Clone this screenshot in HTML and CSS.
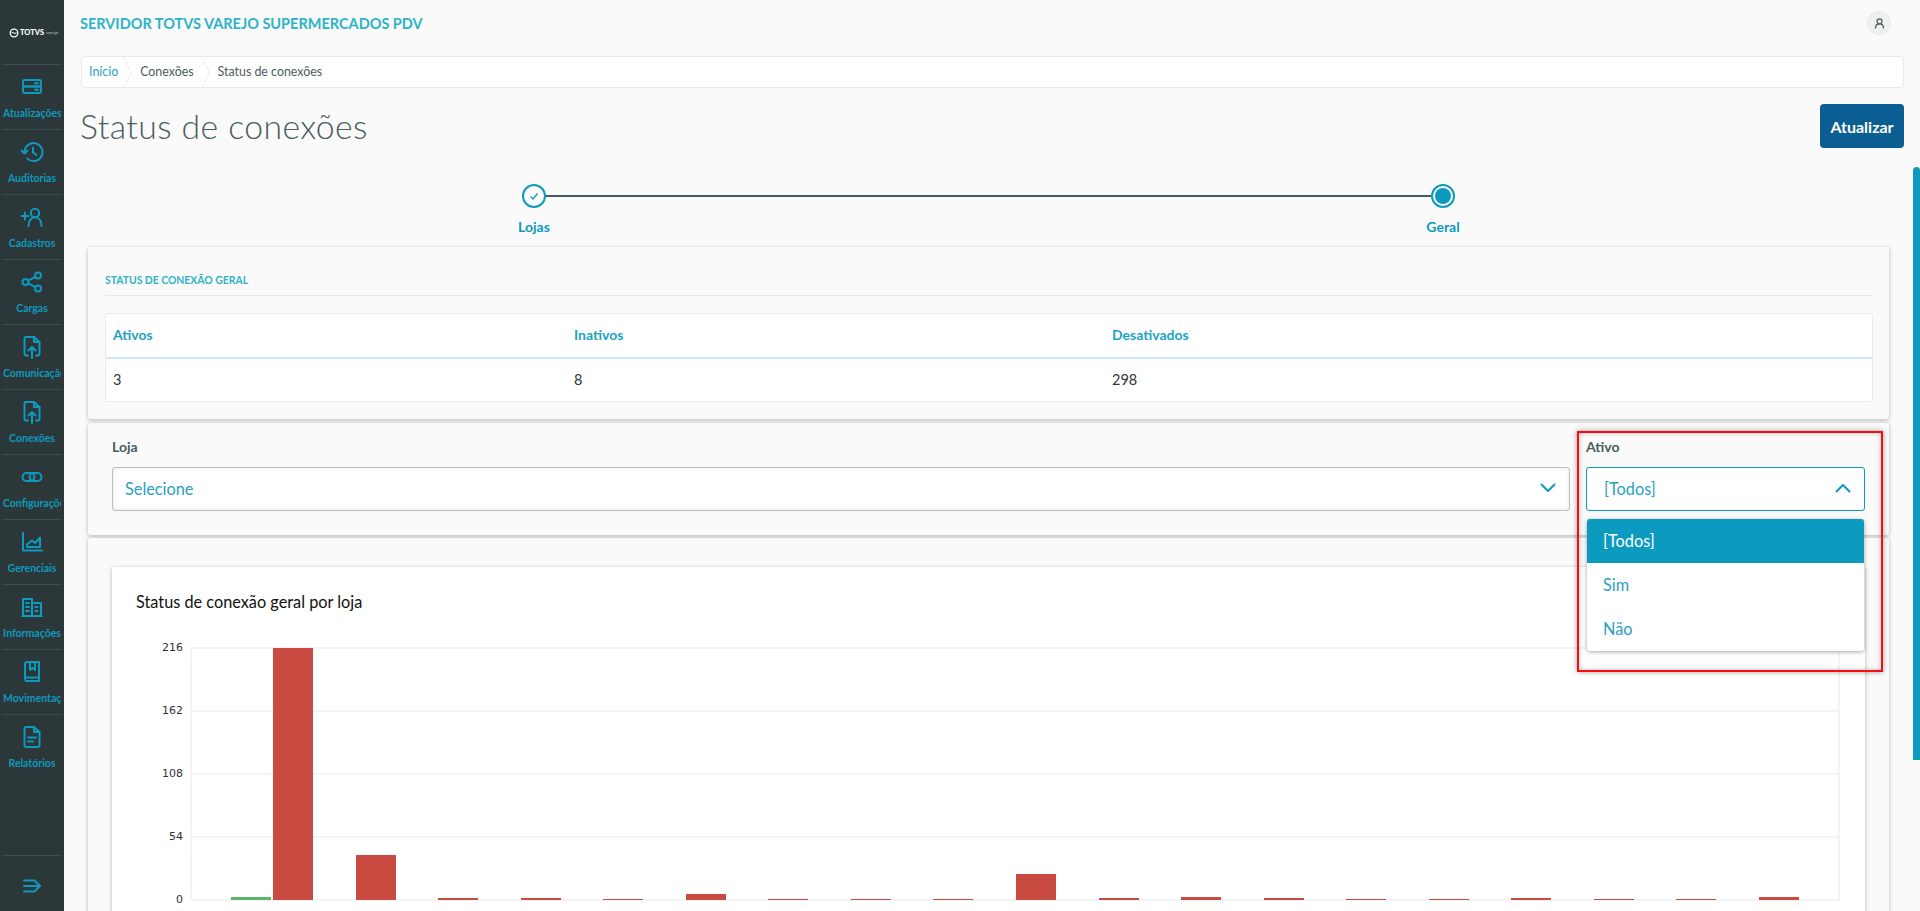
FILE: index.html
```html
<!DOCTYPE html>
<html lang="pt-BR">
<head>
<meta charset="utf-8">
<title>Status de conexões</title>
<link rel="stylesheet" href="styles.css">
</head>
<body>
<aside class="sidebar">
  <div class="logo">
    <svg class="logo-mark" viewBox="0 0 10 10"><circle cx="5" cy="5" r="3.8" fill="none" stroke="#fff" stroke-width="1.3"/><path d="M2.5 4.2 L6 5.4 L7.5 4.8" fill="none" stroke="#fff" stroke-width="1"/></svg>
    <span class="logo-name">TOTVS</span><span class="logo-sub">varejo</span>
  </div>
  <nav class="nav">
    <a class="nav-item"><svg class="nav-icon" viewBox="0 0 24 24"><rect x="3" y="5" width="18" height="6.5" rx="1.4"/><rect x="3" y="11.5" width="18" height="6.5" rx="1.4"/><path d="M15 8.2h3M15 14.8h3"/></svg><span class="nav-label">Atualizações</span></a>
    <a class="nav-item"><svg class="nav-icon" viewBox="0 0 24 24"><path d="M4.5 12a9 9 0 1 1 2.8 6.6"/><path d="M1.5 10.5 4.5 13.5 7.5 10.5"/><path d="M13 7.5V12.5L16.5 15"/></svg><span class="nav-label">Auditorias</span></a>
    <a class="nav-item"><svg class="nav-icon" viewBox="0 0 24 24"><circle cx="15" cy="8" r="4.2"/><path d="M8.5 21c0-5 2.5-8.8 6.500-8.800s6.500 3.800 6.500 8.800"/><path d="M1.500 11h7M5 7.500v7"/></svg><span class="nav-label">Cadastros</span></a>
    <a class="nav-item"><svg class="nav-icon" viewBox="0 0 24 24"><circle cx="18" cy="5.500" r="3"/><circle cx="18" cy="18.500" r="3"/><circle cx="5.500" cy="12" r="3"/><path d="M8.200 10.600 15.300 6.900M8.200 13.400 15.300 17.100"/></svg><span class="nav-label">Cargas</span></a>
    <a class="nav-item"><svg class="nav-icon" viewBox="0 0 24 24"><path d="M8 20.500H6.500A2 2 0 0 1 4.500 18.500V3.500A1.500 1.500 0 0 1 6 2H14L19.500 7V18.500A2 2 0 0 1 17.500 20.500H16"/><path d="M14 2V7H19.500"/><path d="M12 23V12M8.500 15.500 12 12 15.500 15.500"/></svg><span class="nav-label">Comunicação</span></a>
    <a class="nav-item"><svg class="nav-icon" viewBox="0 0 24 24"><path d="M8 20.500H6.500A2 2 0 0 1 4.500 18.500V3.500A1.500 1.500 0 0 1 6 2H14L19.500 7V18.500A2 2 0 0 1 17.500 20.500H16"/><path d="M14 2V7H19.500"/><path d="M12 23V12M8.500 15.500 12 12 15.500 15.500"/></svg><span class="nav-label">Conexões</span></a>
    <a class="nav-item"><svg class="nav-icon" viewBox="0 0 24 24"><rect x="2.500" y="8" width="12" height="8" rx="4"/><rect x="9.500" y="8" width="12" height="8" rx="4"/></svg><span class="nav-label">Configurações</span></a>
    <a class="nav-item"><svg class="nav-icon" viewBox="0 0 24 24"><path d="M3 3V20.500H22"/><path d="M7 17 7 14.500 12 10.500 15 13 20 7.500V17Z"/></svg><span class="nav-label">Gerenciais</span></a>
    <a class="nav-item"><svg class="nav-icon" viewBox="0 0 24 24"><path d="M3 21V4H12V21M12 8H21V21M2 21H22"/><path d="M6 8h3M6 12h3M6 16h3M15.500 12h2M15.500 16h2"/></svg><span class="nav-label">Informações</span></a>
    <a class="nav-item"><svg class="nav-icon" viewBox="0 0 24 24"><path d="M5 18V4A2 2 0 0 1 7 2H19V21H7A2 2 0 0 1 5 19V17.500H19"/><path d="M10 2V10L12.500 8 15 10V2"/></svg><span class="nav-label">Movimentações</span></a>
    <a class="nav-item"><svg class="nav-icon" viewBox="0 0 24 24"><path d="M6 2H14L19.500 7V20A2 2 0 0 1 17.500 22H6.500A2 2 0 0 1 4.500 20V3.500A1.500 1.500 0 0 1 6 2Z"/><path d="M14 2V7H19.500M8 12.500H16M8 16.500H13"/></svg><span class="nav-label">Relatórios</span></a>
  </nav>
  <div class="collapse">
    <svg class="collapse-icon" viewBox="0 0 18 16"><path d="M1 2.500H11.500M1 8H16.500M1 13.500H11.500M12.500 3.500 17 8 12.500 12.500"/></svg>
  </div>
</aside>

<div class="main">
  <div class="content">
    <header class="topbar">
      <span class="app-title">SERVIDOR TOTVS VAREJO SUPERMERCADOS PDV</span>
      <span class="avatar"><svg viewBox="0 0 24 24"><circle cx="12" cy="8.500" r="4"/><path d="M5.500 20c0-5 2.500-7.500 6.500-7.500s6.500 2.500 6.500 7.500"/></svg></span>
    </header>

    <nav class="crumbs">
      <a class="crumb crumb-link">Início</a>
      <span class="crumb">Conexões</span>
      <span class="crumb crumb-last">Status de conexões</span>
    </nav>

    <div class="title-row">
      <h1 class="page-title">Status de conexões</h1>
      <button class="primary-btn">Atualizar</button>
    </div>

    <div class="stepper">
      <div class="step">
        <span class="step-dot"><svg viewBox="0 0 12 12"><path d="M2.500 6.500 5 9 9.500 3.500"/></svg></span>
        <span class="step-label">Lojas</span>
      </div>
      <div class="step-line"></div>
      <div class="step">
        <span class="step-dot"><span class="step-fill"></span></span>
        <span class="step-label">Geral</span>
      </div>
    </div>

    <section class="panel panel-summary">
      <h2 class="panel-heading">STATUS DE CONEXÃO GERAL</h2>
      <div class="summary-table">
        <div class="cell head">Ativos</div>
        <div class="cell head">Inativos</div>
        <div class="cell head">Desativados</div>
        <div class="cell">3</div>
        <div class="cell">8</div>
        <div class="cell">298</div>
      </div>
    </section>

    <section class="panel panel-filters">
      <div class="field field-grow">
        <label class="field-label">Loja</label>
        <div class="select">
          <span>Selecione</span>
          <svg class="chev" viewBox="0 0 16 10"><path d="M1.500 1.500 8 8 14.500 1.500"/></svg>
        </div>
      </div>
      <div class="field field-small">
        <div class="highlight"></div>
        <label class="field-label">Ativo</label>
        <div class="select select-open">
          <span>[Todos]</span>
          <svg class="chev" viewBox="0 0 16 10"><path d="M1.500 8.500 8 2 14.500 8.500"/></svg>
        </div>
        <ul class="menu">
          <li class="menu-item menu-active">[Todos]</li>
          <li class="menu-item">Sim</li>
          <li class="menu-item">Não</li>
        </ul>
      </div>
    </section>

    <section class="panel panel-chart">
      <div class="chart-card">
        <h3 class="chart-title">Status de conexão geral por loja</h3>
        <div class="chart">
          <div class="y-axis">
            <span>216</span><span>162</span><span>108</span><span>54</span><span>0</span>
          </div>
          <div class="plot">
            <div class="slot"><div class="bar bar-green" style="height:3px"></div><div class="bar" style="height:252px"></div></div>
            <div class="slot"><div class="bar" style="height:45px"></div></div>
            <div class="slot"><div class="bar" style="height:2px"></div></div>
            <div class="slot"><div class="bar" style="height:2px"></div></div>
            <div class="slot"><div class="bar" style="height:1px"></div></div>
            <div class="slot"><div class="bar" style="height:6px"></div></div>
            <div class="slot"><div class="bar" style="height:1px"></div></div>
            <div class="slot"><div class="bar" style="height:1px"></div></div>
            <div class="slot"><div class="bar" style="height:1px"></div></div>
            <div class="slot"><div class="bar" style="height:26px"></div></div>
            <div class="slot"><div class="bar" style="height:2px"></div></div>
            <div class="slot"><div class="bar" style="height:3px"></div></div>
            <div class="slot"><div class="bar" style="height:2px"></div></div>
            <div class="slot"><div class="bar" style="height:1px"></div></div>
            <div class="slot"><div class="bar" style="height:1px"></div></div>
            <div class="slot"><div class="bar" style="height:2px"></div></div>
            <div class="slot"><div class="bar" style="height:1px"></div></div>
            <div class="slot"><div class="bar" style="height:1px"></div></div>
            <div class="slot"><div class="bar" style="height:3px"></div></div>
          </div>
        </div>
      </div>
    </section>
  </div>
  <div class="scrolltrack"><div class="scrollthumb"></div></div>
</div>
</body>
</html>
```
FILE: styles.css
```css
* { box-sizing: border-box; }
html, body { margin: 0; height: 911px; overflow: hidden; }
body {
  display: flex;
  background: #fafafa;
  font-family: "Lato", "Open Sans", sans-serif;
  color: #4a5c60;
}

/* sidebar */
.sidebar {
  width: 64px;
  flex: none;
  height: 911px;
  background: #2c3739;
  display: flex;
  flex-direction: column;
}
.logo {
  height: 65px;
  margin: 0 2px;
  padding: 1px 0 0 7px;
  border-bottom: 1px solid #3f4b4d;
  display: flex;
  align-items: center;
  color: #fff;
  white-space: nowrap;
}
.logo-mark { width: 10px; height: 10px; margin-right: 1px; }
.logo-name { font-size: 7.500px; font-weight: 900; line-height: 10px; }
.logo-sub { font-size: 4.500px; margin-left: 2px; color: #c4c9ca; line-height: 10px; }
.nav { flex: 1; display: flex; flex-direction: column; }
.nav-item {
  height: 65px;
  margin: 0 2px;
  padding-top: 10px;
  border-bottom: 1px solid #3f4b4d;
  display: flex;
  flex-direction: column;
  align-items: center;
  overflow: hidden;
}
.nav-item:last-child { border-bottom: none; }
.nav-icon {
  width: 24px;
  height: 24px;
  flex: none;
  fill: none;
  stroke: #0c9abe;
  stroke-width: 2;
  stroke-linecap: round;
  stroke-linejoin: round;
}
.nav-label {
  width: 58px;
  margin-top: 6px;
  overflow: hidden;
  text-align: center;
  white-space: nowrap;
  font-size: 10.500px;
  font-weight: 700;
  line-height: 16px;
  color: #0c9abe;
}
.collapse {
  height: 56px;
  margin: 0 2px;
  padding-top: 4px;
  border-top: 1px solid #3f4b4d;
  display: flex;
  align-items: center;
  justify-content: center;
}
.collapse-icon {
  width: 18px;
  height: 16px;
  fill: none;
  stroke: #0c9abe;
  stroke-width: 2;
  stroke-linecap: round;
  stroke-linejoin: round;
}

/* main column */
.main { flex: 1; min-width: 0; height: 911px; display: flex; overflow: hidden; }
.content { flex: 1; min-width: 0; padding: 0 9px 0 16px; }
.scrolltrack { width: 7px; flex: none; padding-top: 167px; }
.scrollthumb { height: 593px; background: #0c9abe; border-radius: 4px 4px 0 0; }

.topbar {
  height: 56px;
  padding: 0 13px 10px 0;
  display: flex;
  align-items: center;
  justify-content: space-between;
}
.app-title {
  font-size: 14.500px;
  font-weight: 700;
  color: #2db3c6;
}
.avatar {
  width: 24px;
  height: 24px;
  border-radius: 50%;
  background: #f0f0f0;
  border: 1px solid #e8e8e8;
  display: flex;
  align-items: center;
  justify-content: center;
}
.avatar svg {
  width: 15px;
  height: 15px;
  fill: none;
  stroke: #4a5c60;
  stroke-width: 2;
}

/* breadcrumb */
.crumbs {
  height: 32px;
  margin-left: 1px;
  background: #fff;
  border: 1px solid #ebebeb;
  border-radius: 3px;
  display: flex;
  align-items: center;
  font-size: 12.400px;
  overflow: hidden;
}
.crumb {
  position: relative;
  height: 30px;
  line-height: 30px;
  padding: 0 12px;
  white-space: nowrap;
}
.crumb:first-child { padding: 0 10px 0 7px; }
.crumb::after {
  content: "";
  position: absolute;
  right: -7px;
  top: 4px;
  width: 22px;
  height: 22px;
  border-top: 1px solid #e4e4e4;
  border-right: 1px solid #e4e4e4;
  transform: scaleX(0.5) rotate(45deg);
}
.crumb-last::after { display: none; }
.crumb-link { color: #2b9fbf; }

/* title row */
.title-row {
  height: 44px;
  margin-top: 16px;
  display: flex;
  align-items: center;
  justify-content: space-between;
}
.page-title {
  margin: 0;
  font-size: 33.800px;
  font-weight: 300;
  letter-spacing: 0.4px;
  color: #4a5c60;
}
.primary-btn {
  width: 84px;
  height: 44px;
  border: none;
  border-radius: 4px;
  background: #0b5e91;
  color: #fff;
  font-family: inherit;
  font-size: 16px;
  font-weight: 700;
  padding: 0;
}

/* stepper */
.stepper {
  display: flex;
  margin: 36px 431px 0 424px;
  height: 63px;
}
.step {
  width: 60px;
  flex: none;
  display: flex;
  flex-direction: column;
  align-items: center;
  gap: 10px;
}
.step-dot {
  width: 24px;
  height: 24px;
  border-radius: 50%;
  border: 2px solid #0c9abe;
  display: flex;
  align-items: center;
  justify-content: center;
}
.step-dot svg {
  width: 12px;
  height: 12px;
  fill: none;
  stroke: #0c9abe;
  stroke-width: 1.300;
}
.step-fill { width: 16px; height: 16px; border-radius: 50%; background: #0c9abe; }
.step-label {
  font-size: 14px;
  font-weight: 700;
  line-height: 18px;
  color: #0c9abe;
}
.step-line {
  flex: 1;
  height: 2px;
  margin: 11px -18px 0;
  background: #455a60;
}

/* panels */
.panel {
  margin: 0 15px 0 8px;
  background: #fafafa;
  border-radius: 3px;
  box-shadow: 0 1px 4px rgba(0, 0, 0, 0.28);
}
.panel-summary { height: 172px; padding: 27px 16px 0 17px; }
.panel-heading {
  margin: 0;
  height: 22px;
  font-size: 10.400px;
  line-height: 12px;
  font-weight: 700;
  color: #2db3c6;
  border-bottom: 1px solid #e8e8e8;
}
.summary-table {
  margin-top: 17px;
  height: 89px;
  display: grid;
  grid-template-columns: 461px 538px 1fr;
  grid-template-rows: 45px 43px;
  background: #fff;
  border: 1px solid #ebebeb;
  border-radius: 3px;
}
.cell {
  padding: 0 0 2px 7px;
  display: flex;
  align-items: center;
  font-size: 14.500px;
  color: #2c3739;
}
.head {
  font-weight: 700;
  font-size: 14px;
  color: #1aa3c4;
  border-bottom: 2px solid #cdeaf3;
}

.panel-filters {
  height: 112px;
  margin-top: 4px;
  padding: 14px 24px 0;
  display: flex;
  gap: 16px;
}
.field { position: relative; }
.field-grow { flex: 1; }
.field-small { width: 279px; flex: none; }
.field-label {
  display: block;
  height: 20px;
  margin-bottom: 10px;
  font-size: 14px;
  line-height: 20px;
  font-weight: 700;
  color: #4a5c60;
}
.select {
  height: 44px;
  padding: 0 13px 2px 12px;
  background: #fff;
  border: 1px solid #b9c0c2;
  border-radius: 3px;
  box-shadow: inset 0 0 4px rgba(0, 0, 0, 0.1);
  display: flex;
  align-items: center;
  justify-content: space-between;
  font-size: 16.300px;
  color: #2b9fbf;
}
.select-open {
  border-color: #0c9abe;
  padding-left: 17px;
  box-shadow: none;
}
.chev {
  width: 16px;
  height: 10px;
  fill: none;
  stroke: #0c9abe;
  stroke-width: 2;
  stroke-linecap: round;
  stroke-linejoin: round;
}
.menu {
  position: absolute;
  z-index: 2;
  top: 82px;
  left: 1px;
  right: 1px;
  margin: 0;
  padding: 0;
  list-style: none;
  background: #fff;
  border-radius: 3px;
  box-shadow: 0 1px 4px rgba(0, 0, 0, 0.35);
}
.menu-item {
  height: 44px;
  line-height: 43px;
  padding-left: 16px;
  font-size: 16.300px;
  color: #2b9fbf;
}
.menu-active {
  background: #0c9abe;
  color: #fff;
  border-radius: 3px 3px 0 0;
}
.highlight {
  position: absolute;
  z-index: 3;
  top: -6px;
  left: -9px;
  width: 306px;
  height: 241px;
  border: 2px solid #f40d12;
  box-shadow: 0 0 5px rgba(0, 0, 0, 0.4), inset 0 0 5px rgba(0, 0, 0, 0.25);
  pointer-events: none;
}

.panel-chart {
  height: 400px;
  margin-top: 3px;
  padding: 29px 24px 0;
}
.chart-card {
  height: 371px;
  background: #fff;
  box-shadow: 0 1px 4px rgba(0, 0, 0, 0.28);
  padding: 25px 25px 0 24px;
}
.chart-title {
  margin: 0;
  height: 56px;
  font-size: 16.300px;
  line-height: 20px;
  font-weight: 400;
  color: #111;
}
.chart { display: flex; }
.y-axis {
  width: 47px;
  height: 266px;
  margin: -7px 7px 0 0;
  flex: none;
  display: flex;
  flex-direction: column;
  justify-content: space-between;
  text-align: right;
  font-family: "DejaVu Sans", sans-serif;
  font-size: 11px;
  line-height: 14px;
  color: #333;
}
.plot {
  flex: 1;
  height: 254px;
  margin-top: -1px;
  display: flex;
  align-items: flex-end;
  padding: 0 0 1px 38.500px;
  border-left: 2px solid #f4f4f4;
  border-right: 2px solid #f4f4f4;
  background-image: repeating-linear-gradient(to bottom, #f4f4f4 0, #f4f4f4 2px, transparent 2px, transparent 63px);
}
.slot {
  width: 82.550px;
  flex: none;
  display: flex;
  justify-content: flex-end;
  align-items: flex-end;
  gap: 2px;
}
.bar { width: 40px; background: #c84a41; }
.bar-green { background: #5cb56d; }
```
